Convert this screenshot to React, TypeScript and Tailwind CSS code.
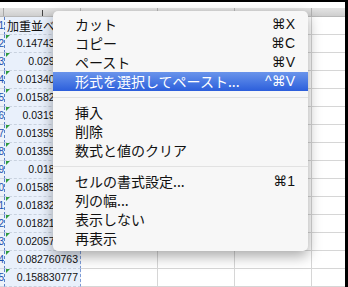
import React from "react";

const values = [
  "0.147432658",
  "0.0291846",
  "0.013405218",
  "0.015823647",
  "0.03192847",
  "0.013591204",
  "0.013557382",
  "0.0189547",
  "0.015852931",
  "0.018326574",
  "0.018219863",
  "0.020573418",
  "0.082760763",
  "0.158830777",
];

type Item = { label: string; key?: string; active?: boolean } | "sep";

const items: Item[] = [
  { label: "カット", key: "⌘X" },
  { label: "コピー", key: "⌘C" },
  { label: "ペースト", key: "⌘V" },
  { label: "形式を選択してペースト...", key: "^⌘V", active: true },
  "sep",
  { label: "挿入" },
  { label: "削除" },
  { label: "数式と値のクリア" },
  "sep",
  { label: "セルの書式設定...", key: "⌘1" },
  { label: "列の幅..." },
  { label: "表示しない" },
  { label: "再表示" },
];

function GreenMark() {
  return (
    <span className="absolute left-[1px] top-0 w-0 h-0 border-t-[4px] border-t-[#2f9a3c] border-r-[4px] border-r-transparent" />
  );
}

function Row({ n, children }: { n: number; children?: React.ReactNode }) {
  return (
    <div className="flex h-[18px]">
      <div className="w-[4px] overflow-hidden flex justify-end border-b border-[#d2d8e2] bg-[#eef2f8]">
        <span className="text-[10px] leading-[18px] text-[#1d4fae] shrink-0">{n}</span>
      </div>
      <div className="relative w-[77px] border-l border-dashed border-l-[#5a7fc6] border-r border-r-[#7d9bd6] border-b border-b-[#c9d2df] bg-[#e9f0fb]">
        {children}
      </div>
      <div className="w-[77px] border-r border-b border-[#d6d6d6]" />
      <div className="w-[77px] border-r border-b border-[#d6d6d6]" />
      <div className="w-[77px] border-r border-b border-[#d6d6d6]" />
      <div className="flex-1 border-b border-[#d6d6d6]" />
    </div>
  );
}

function ContextMenu() {
  return (
    <div className="absolute left-[53px] top-[11px] w-[255px] h-[240px] rounded-[5px] bg-[#f7f7f7] shadow-[0_5px_14px_rgba(0,0,0,0.35)] pt-[4px] font-['Noto_Sans_CJK_JP',sans-serif] text-[14px] text-[#111]">
      {items.map((it, i) =>
        it === "sep" ? (
          <div key={i} className="h-[12px] flex items-center">
            <div className="w-full h-[1px] bg-[#e2e2e2]" />
          </div>
        ) : (
          <div
            key={i}
            className={
              it.active
                ? "flex items-center justify-between h-[19px] pl-[22px] pr-[13px] bg-gradient-to-b from-[#6a94eb] to-[#2c5edb] text-white"
                : "flex items-center justify-between h-[19px] pl-[22px] pr-[13px]"
            }
          >
            <span className="leading-[19px]">{it.label}</span>
            {it.key && (
              <span className="font-['Liberation_Sans','DejaVu_Sans',sans-serif] text-[14px] leading-[19px]">
                {it.key}
              </span>
            )}
          </div>
        )
      )}
    </div>
  );
}

export default function App() {
  return (
    <div className="relative w-[348px] h-[287px] overflow-hidden bg-white flex font-['Liberation_Sans',sans-serif]">
      <div className="w-[345px] flex flex-col">
        <div className="h-[2px] bg-black" />
        <div className="h-[8px] bg-white" />
        {/* column headers */}
        <div className="flex h-[12px] bg-gradient-to-b from-[#e4e4e4] to-[#cfcfcf] border-b border-[#b9b9b9]">
          <div className="w-[4px] border-r border-[#a9a9a9]" />
          <div className="relative w-[77px] border-r border-[#b3b3b3]">
            <span className="absolute left-[38px] top-[2px] w-[1px] h-[6px] bg-[#444]" />
          </div>
          <div className="w-[77px] border-r border-[#b3b3b3]" />
          <div className="w-[77px] border-r border-[#b3b3b3]" />
          <div className="w-[77px] border-r border-[#b3b3b3]" />
          <div className="flex-1" />
        </div>
        <Row n={1}>
          <span className="block pl-[2px] text-[12px] leading-[17px] whitespace-nowrap overflow-hidden font-['Noto_Sans_CJK_JP',sans-serif] text-[#111]">
            加重並べ替え平均
          </span>
        </Row>
        {values.map((v, i) => (
          <Row key={i} n={i + 2}>
            <GreenMark />
            <span className="block text-right pr-[2px] text-[10.5px] leading-[17px] text-[#111] whitespace-nowrap">
              {v}
            </span>
          </Row>
        ))}
      </div>
      <div className="w-[3px] bg-black" />
      <ContextMenu />
    </div>
  );
}
